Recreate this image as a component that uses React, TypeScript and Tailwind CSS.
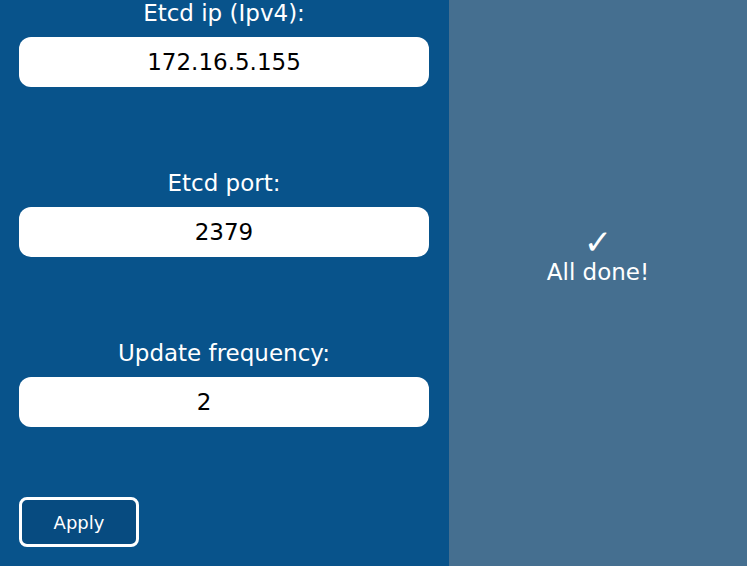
import React from 'react';

const fields = [
  { label: 'Etcd ip (Ipv4):', value: '172.16.5.155', pad: '' },
  { label: 'Etcd port:', value: '2379', pad: '' },
  { label: 'Update frequency:', value: '2', pad: 'pr-[40px]' },
];

const App: React.FC = () => {
  return (
    <div className="flex h-[566px] w-[747px] overflow-hidden font-['Tahoma','DejaVu_Sans',sans-serif]">
      {/* Settings form */}
      <div className="flex w-[449px] flex-col bg-[#08538b] pl-[19px] pr-[20px]">
        {fields.map((f, i) => (
          <div key={f.label} className={i === 0 ? 'mt-[0px]' : 'mt-[83px]'}>
            <div className="h-[37px] text-center text-[23px] leading-[26px] text-white">{f.label}</div>
            <div className={`flex h-[50px] items-center justify-center rounded-[12px] bg-white text-[23px] text-black ${f.pad}`}>
              {f.value}
            </div>
          </div>
        ))}
        <button className="mt-[70px] h-[50px] w-[120px] rounded-[8px] border-[3px] border-white bg-[#074b80] text-[18px] text-white">
          Apply
        </button>
      </div>

      {/* Status */}
      <div className="flex flex-1 flex-col items-center justify-center bg-[#456f90] pb-[56px] text-white">
        <div className="text-[34px] font-bold leading-[34px]">✓</div>
        <div className="text-[23px] leading-[26px]">All done!</div>
      </div>
    </div>
  );
};

export default App;
